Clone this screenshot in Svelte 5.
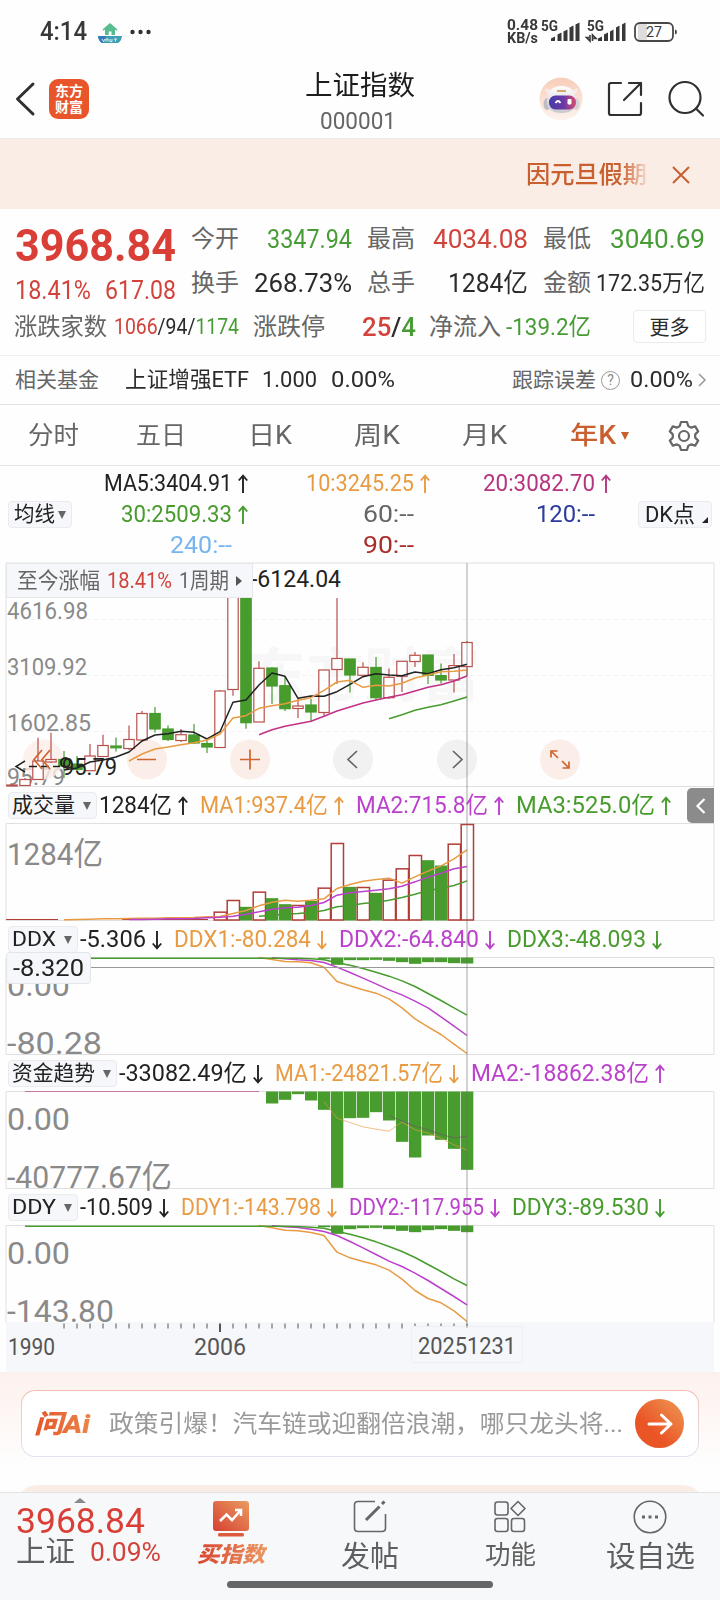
<script lang="ts">
  type Candle = { up: boolean; top: number; bottom: number; high: number; low: number }
  type Series = { color: string; from: number; ys: number[]; thin?: boolean }
  type Legend = { text: string; width: number; color: string; dir?: 'up' | 'down' }
  type Label = { text: string; width: number; y: number }
  type Panel = {
    name: string
    nameWidth: number
    legend: Legend[]
    labels: Label[]
    series: Series[]
    bars: { from: number; ys: number[] }
  }

  const RED = '#b33d37'
  const GREEN = '#479c2d'
  const ORANGE = '#e89b43'
  const PURPLE = '#bb41cc'
  const INK = '#222'

  // squeeze or stretch a label to a fixed width
  function fit(node: HTMLElement, width: number) {
    const natural = node.getBoundingClientRect().width
    node.style.width = width + 'px'
    node.style.transform = `scaleX(${width / natural})`
  }

  const cx = (i: number) => 12 + 13 * i

  const points = (s: Series, div = 3) =>
    s.ys.map((y, k) => `${cx(s.from + k)},${y / div}`).join(' ')

  const quotes = [
    { label: '今开', value: '3347.94', width: 85, tone: 'green' },
    { label: '最高', value: '4034.08', width: 95, tone: 'red' },
    { label: '最低', value: '3040.69', width: 95, tone: 'green' },
    { label: '换手', value: '268.73%', width: 98, tone: '' },
    { label: '总手', value: '1284亿', width: 80, tone: '' },
    { label: '金额', value: '172.35万亿', width: 109, tone: 'small' },
  ]

  const averages: Legend[] = [
    { text: 'MA5:3404.91', width: 128, color: INK, dir: 'up' },
    { text: '10:3245.25', width: 108, color: '#e89b43', dir: 'up' },
    { text: '20:3082.70', width: 112, color: '#b5357f', dir: 'up' },
    { text: '30:2509.33', width: 111, color: GREEN, dir: 'up' },
    { text: '60:--', width: 51, color: '#666' },
    { text: '120:--', width: 59, color: '#2a3a9e' },
    { text: '240:--', width: 62, color: '#78b4ee' },
    { text: '90:--', width: 51, color: '#a82e2c' },
  ]

  // up, body top, body bottom, high, low
  const candles: Candle[] = (
    [
      [1, 785, 786, 785, 786], [1, 779.5, 785.5, 778, 786], [1, 761, 779.5, 737.7, 780],
      [1, 759.5, 762, 732.7, 763], [0, 759.5, 766, 751, 778], [0, 764, 769.5, 756, 770],
      [1, 756, 770.7, 744, 771], [1, 745.5, 756.5, 734.7, 757], [0, 746, 747.8, 737.5, 751.5],
      [1, 739.5, 748.5, 725.5, 750], [1, 713.5, 740, 711, 742], [0, 713.5, 729, 707, 732.5],
      [0, 729, 739.5, 725.5, 741], [1, 734.7, 740.5, 729, 742], [0, 735, 743, 724, 744],
      [0, 743.5, 747, 740, 753], [1, 691, 747.5, 690, 748], [1, 590, 689.5, 590, 695.7],
      [0, 590, 722.7, 590, 728.7], [1, 668.3, 722, 661.3, 722], [0, 668, 686, 667, 704],
      [0, 685.7, 708.7, 677, 711], [1, 706, 708.5, 699, 718], [0, 705, 712, 699, 721],
      [1, 670, 712.5, 670, 715.7], [1, 658.5, 669.5, 598, 684], [0, 659, 675, 659, 692.5],
      [1, 667.3, 675.3, 662.3, 676], [0, 667.5, 697.7, 657, 700], [1, 677.3, 697.7, 668.5, 699],
      [1, 661.3, 676.3, 661, 692], [1, 655.3, 661.5, 652, 667], [0, 655, 675.3, 655, 684],
      [0, 675.6, 680, 663.6, 683.4], [1, 665.6, 680, 654, 692.6], [1, 642.5, 666.6, 641, 676],
    ] as number[][]
  ).map(([up, top, bottom, high, low]) => ({ up: up === 1, top, bottom, high, low }))

  const priceLines: Series[] = [
    {
      color: INK, from: 4,
      ys: [770, 768, 762, 760, 757, 752, 741, 735, 733.7, 731.3, 732.3, 739, 731.7, 702.3, 700, 685, 673, 676.3, 698.3, 696, 696.3, 691.7, 684.3, 676.7, 673.7, 675, 675.7, 672, 673.7, 669.7, 667.7, 664.3],
    },
    {
      color: ORANGE, from: 9,
      ys: [761, 754, 749, 747, 744.7, 742.7, 740, 734, 718, 715.7, 708.3, 705.7, 703.7, 700.3, 697.7, 690.3, 682, 680.3, 687.3, 685.3, 686, 683.3, 678, 675, 671.7, 671.3, 670],
    },
    {
      color: '#c23088', from: 19,
      ys: [734.7, 729.7, 726.3, 723.7, 721.3, 716.3, 711, 707, 703, 700, 697.3, 694.7, 691, 687.3, 684.7, 681, 676],
    },
    { color: GREEN, from: 29, ys: [718.7, 714.7, 710.3, 707.3, 704.7, 701, 697] },
  ]

  const volumeUp = [1, 1, 0, 1, 0, 0, 1, 0, 1, 1, 0, 1, 0, 1, 1, 1, 0, 0, 1, 1]

  const panels: Panel[] = [
    {
      name: '成交量', nameWidth: 63,
      legend: [
        { text: '1284亿', width: 73, color: INK, dir: 'up' },
        { text: 'MA1:937.4亿', width: 128, color: ORANGE, dir: 'up' },
        { text: 'MA2:715.8亿', width: 132, color: PURPLE, dir: 'up' },
        { text: 'MA3:525.0亿', width: 139, color: GREEN, dir: 'up' },
      ],
      labels: [{ text: '1284亿', width: 96, y: 41 }],
      series: [
        { color: ORANGE, from: 4, ys: [289, 288, 287, 286, 286, 285, 284, 284, 283, 283, 282, 280, 279, 270, 261, 247, 236, 230, 233, 230, 226, 195, 183, 173, 168, 164, 179, 160, 143, 127, 106, 79] },
        { color: PURPLE, from: 9, ys: [288, 288, 287, 286, 286, 285, 283, 281, 278, 272, 265, 257, 253, 251, 246, 237, 215, 208, 204, 200, 196, 188, 175, 161, 149, 136, 129] },
        { color: GREEN, from: 19, ys: [278, 275, 272, 270, 267, 261, 250, 246, 240, 236, 230, 222, 212, 201, 195, 186, 172] },
      ],
      bars: { from: 16, ys: [266, 231, 250, 206, 224, 242, 246, 232, 194, 60, 190, 192, 208, 170, 136, 96, 110, 126, 62, 3] },
    },
    {
      name: 'DDX', nameWidth: 44,
      legend: [
        { text: '-5.306', width: 66, color: INK, dir: 'down' },
        { text: 'DDX1:-80.284', width: 137, color: ORANGE, dir: 'down' },
        { text: 'DDX2:-64.840', width: 140, color: PURPLE, dir: 'down' },
        { text: 'DDX3:-48.093', width: 139, color: GREEN, dir: 'down' },
      ],
      labels: [{ text: '0.00', width: 63, y: 38 }, { text: '-80.28', width: 95, y: 95.5 }],
      series: [
        { color: ORANGE, from: 19, ys: [0, 6, 12, 13, 16, 29, 72, 85, 97, 107, 124, 151, 184, 208, 231, 260, 288] },
        { color: PURPLE, from: 20, ys: [1, 4, 7, 9, 15, 29, 45, 62, 79, 97, 112, 131, 151, 178, 206, 234] },
        { color: GREEN, from: 1, ys: [2, 2, 2, 2, 2, 2, 2, 2, 2, 2, 2, 2, 2, 2, 2, 2, 2, 2, 2, 2, 2, 2, 4, 7, 16, 23, 33, 44, 56, 70, 87, 108, 129, 151, 173] },
      ],
      bars: { from: 24, ys: [5, 22, 8, 8, 7, 10, 14, 19, 14, 14, 17, 18] },
    },
    {
      name: '资金趋势', nameWidth: 83,
      legend: [
        { text: '-33082.49亿', width: 128, color: INK, dir: 'down' },
        { text: 'MA1:-24821.57亿', width: 168, color: ORANGE, dir: 'down' },
        { text: 'MA2:-18862.38亿', width: 178, color: PURPLE, dir: 'up' },
      ],
      labels: [{ text: '0.00', width: 63, y: 38 }, { text: '-40777.67亿', width: 165, y: 96 }],
      series: [
        { color: ORANGE, from: 24, thin: true, ys: [31, 80, 93, 106, 113, 119, 92, 115, 125, 140, 160, 176] },
        { color: '#76506e', from: 29, thin: true, ys: [73, 88, 104, 115, 129, 139, 135] },
        { color: '#b5357f', from: 1, thin: true, ys: [0, 0, 0, 0, 0, 0, 0, 0, 0, 0, 0, 0, 0, 0, 0, 0, 0, 0, 0] },
      ],
      bars: { from: 20, ys: [36, 25, 8, 27, 55, 289, 80, 79, 62, 87, 151, 198, 132, 145, 172, 235] },
    },
    {
      name: 'DDY', nameWidth: 44,
      legend: [
        { text: '-10.509', width: 73, color: INK, dir: 'down' },
        { text: 'DDY1:-143.798', width: 140, color: ORANGE, dir: 'down' },
        { text: 'DDY2:-117.955', width: 135, color: PURPLE, dir: 'down' },
        { text: 'DDY3:-89.530', width: 137, color: GREEN, dir: 'down' },
      ],
      labels: [{ text: '0.00', width: 63, y: 38 }, { text: '-143.80', width: 107, y: 95.5 }],
      series: [
        { color: ORANGE, from: 19, ys: [0, 7, 14, 16, 21, 30, 80, 97, 108, 118, 134, 161, 195, 219, 232, 256, 288] },
        { color: PURPLE, from: 20, ys: [1, 4, 6, 11, 18, 30, 48, 67, 87, 107, 123, 143, 165, 189, 213, 238] },
        { color: GREEN, from: 1, ys: [2, 2, 2, 2, 2, 2, 2, 2, 2, 2, 2, 2, 2, 2, 2, 2, 2, 2, 2, 2, 2, 3, 5, 8, 18, 26, 37, 49, 63, 78, 96, 117, 138, 160, 180] },
      ],
      bars: { from: 24, ys: [5, 25, 11, 8, 7, 11, 16, 20, 14, 11, 16, 20] },
    },
  ]

  const ticks = Array.from({ length: 32 }, (_, k) => cx(k + 4))
</script>

{#snippet arrow(dir: string | undefined)}
  <svg class="arrow" viewBox="0 0 10 20" width="10" height="20">
    {#if dir === 'up'}
      <path d="M5 19V2M.8 6.5 5 1.6l4.2 4.9" />
    {:else if dir === 'down'}
      <path d="M5 1v17M.8 13.5 5 18.4l4.2-4.9" />
    {/if}
  </svg>
{/snippet}

<main class="screen">
  <header class="status">
    <b class="status__time" use:fit={47}>4:14</b>
    <svg class="status__app" viewBox="0 0 24 22" width="24" height="22">
      <path d="M12 1 4.5 7.5l1 1.2L7 7.5V13h3.7V9.5h2.8V13H17V7.5l1.5 1.2 1-1.2z" fill="#57bd8e" />
      <path d="M0 14h24q-.4 5-4 7H4q-3.600-2-4-7z" fill="#3f9fb4" />
      <path d="M0 14h8l-3 7H4q-3.600-2-4-7z" fill="#3978bd" />
      <path d="M4 17l1.500 2.500L7 17m1 2.500V17h2v2.500m2-2.500v2.500h2m0-2.500v2.500m2-2.500h3m-1.500 0v2.500" fill="none" stroke="#d9f1ee" />
    </svg>
    <svg class="status__more" viewBox="0 0 22 6" width="22" height="6" fill="#333">
      <circle cx="2.500" cy="3" r="2.200" /><circle cx="10.500" cy="3" r="2.200" /><circle cx="18.500" cy="3" r="2.200" />
    </svg>
    <div class="status__speed"><b use:fit={31}>0.48</b><b use:fit={31}>KB/s</b></div>
    <div class="signal">
      <b use:fit={17}>5G</b>
      <svg viewBox="0 0 40 20" width="40" height="20" fill="#383838">
        <path d="M11 19v-2.500l4-2V19zM17.500 19v-6.500l4-2V19zM23.500 19V9.500l4-2V19zM29.500 19V5.500l4-2V19zM35.500 19V2.500l4-2V19z" />
      </svg>
    </div>
    <div class="signal signal--second">
      <b use:fit={17}>5G</b>
      <svg viewBox="0 0 40 20" width="40" height="20" fill="#383838">
        <path d="M12 19v-2.500l4-2V19zM18 19v-6.500l4-2V19zM24 19V9.500l3.500-2V19zM30 19V5.500l3.500-2V19zM36 19V2.500l3.500-2V19z" />
        <path d="M4 13v6l-3.500-3.500H3M6.500 19v-6l3.500 3.500H7.500" fill="none" stroke="#383838" stroke-width="1.600" />
      </svg>
    </div>
    <svg class="battery" viewBox="0 0 46 20" width="46" height="20">
      <rect x="5" y="2" width="9" height="16" fill="#ddd" />
      <rect x="2" y="1" width="38" height="18" rx="5" fill="none" stroke="#484848" stroke-width="1.800" />
      <path d="M42 7.500q2 .3 2 2.500t-2 2.500z" fill="#484848" />
      <text x="13" y="15" textLength="16" lengthAdjust="spacingAndGlyphs">27</text>
    </svg>
  </header>

  <nav class="head">
    <svg class="head__back" viewBox="0 0 22 36" width="22" height="36">
      <path d="M19 3 3.500 18 19 33" />
    </svg>
    <div class="logo"><span>东方</span><span>财富</span></div>
    <div class="head__title">
      <span class="head__name" use:fit={110}>上证指数</span>
      <span class="head__code" use:fit={76}>000001</span>
    </div>
    <svg class="head__bot" viewBox="0 0 44 44" width="44" height="44">
      <defs>
        <linearGradient id="bot-bg" x2="0" y2="1"><stop stop-color="#f8cdb9" /><stop offset="1" stop-color="#fdf3ee" /></linearGradient>
        <linearGradient id="bot-visor"><stop stop-color="#463ba9" /><stop offset=".55" stop-color="#6a39a5" /><stop offset="1" stop-color="#dc4c71" /></linearGradient>
        <linearGradient id="bot-head" x2="0" y2="1"><stop stop-color="#fff" /><stop offset="1" stop-color="#c9c7cc" /></linearGradient>
      </defs>
      <circle cx="22" cy="22" r="21.500" fill="url(#bot-bg)" />
      <path d="M6 11q0 6 4 6l5-3zM39 11q0 6-4 6l-5-3z" fill="#f7e9e4" />
      <ellipse cx="8" cy="27" rx="3.500" ry="6" fill="#bfbcc3" /><ellipse cx="37" cy="27" rx="3.500" ry="6" fill="#d5d1d8" />
      <path d="M8 24Q9 9 22.500 9T37 24q0 12-14.500 12T8 24z" fill="url(#bot-head)" />
      <path d="M18 14h9" stroke="#dda56d" stroke-width="2" />
      <rect x="10" y="18.500" width="27" height="14" rx="6.500" fill="url(#bot-visor)" />
      <path d="M16.500 26q2.500-4 5 0" fill="none" stroke="#fff" stroke-width="1.800" />
      <rect x="28.500" y="22" width="4" height="5.500" rx="1" fill="#fff" />
    </svg>
    <svg class="head__share" viewBox="0 0 36 36" width="36" height="36">
      <path d="M14 2H4Q2 2 2 4v28q0 2 2 2h28q2 0 2-2V22M22 2h12v12M34 2 17 19" />
    </svg>
    <svg class="head__search" viewBox="0 0 38 38" width="38" height="38">
      <circle cx="18" cy="17.500" r="15.500" /><path d="m29 28.500 7 7" />
    </svg>
  </nav>

  <section class="banner">
    <span use:fit={121}>因元旦假期</span>
    <svg viewBox="0 0 18 18" width="18" height="18"><path d="m1 1 16 16M17 1 1 17" /></svg>
  </section>

  <section class="quote">
    <div class="quote__last">
      <b class="quote__price" use:fit={161}>3968.84</b>
      <div class="quote__change"><span use:fit={76}>18.41%</span><span use:fit={71}>617.08</span></div>
    </div>
    <div class="quote__grid">
      {#each quotes as q}
        <div class="cell">
          <span class="muted" use:fit={48}>{q.label}</span>
          <span class={q.tone} use:fit={q.width}>{q.value}</span>
        </div>
      {/each}
    </div>
  </section>

  <section class="breadth">
    <span class="muted" use:fit={93}>涨跌家数</span>
    <span class="breadth__count" use:fit={125}><i class="red">1066</i>/94/<i class="green">1174</i></span>
    <span class="muted breadth__limit" use:fit={72}>涨跌停</span>
    <span class="breadth__ratio" use:fit={54}><i class="red">25</i>/<i class="green">4</i></span>
    <span class="muted breadth__flow" use:fit={72}>净流入</span>
    <span class="green breadth__net" use:fit={85}>-139.2亿</span>
    <button class="more">更多</button>
  </section>

  <section class="fund">
    <span class="muted" use:fit={84}>相关基金</span>
    <span class="fund__name" use:fit={124}>上证增强ETF</span>
    <span class="fund__nav" use:fit={55}>1.000</span>
    <span class="fund__pct" use:fit={64}>0.00%</span>
    <span class="muted fund__err" use:fit={84}>跟踪误差</span>
    <span class="help">?</span>
    <span use:fit={63}>0.00%</span>
    <svg viewBox="0 0 8 14" width="8" height="14"><path d="m1 1 6 6-6 6" /></svg>
  </section>

  <nav class="tabs">
    <span use:fit={51}>分时</span>
    <span use:fit={50}>五日</span>
    <span use:fit={44}>日K</span>
    <span use:fit={46}>周K</span>
    <span use:fit={45}>月K</span>
    <span class="tabs__active" use:fit={46}>年K</span>
    <i class="caret caret--active"></i>
    <svg class="gear" viewBox="0 0 32 32" width="32" height="32">
      <path d="M13 2h6l1.200 4 2.800 1.600 4.200-1.200 3 5-3 3v3.200l3 3-3 5-4.200-1.200-2.800 1.600L19 30h-6l-1.200-4L9 24.400l-4.200 1.200-3-5 3-3v-3.200l-3-3 3-5L9 7.600 11.800 6z" />
      <circle cx="16" cy="16" r="5" />
    </svg>
  </nav>

  <section class="averages">
    <span class="tag tag--ma"><span use:fit={41}>均线</span><i class="caret"></i></span>
    <div class="averages__grid">
      {#each averages as a}
        <div class="averages__item" style:color={a.color}>
          <span use:fit={a.width}>{a.text}</span>
          {@render arrow(a.dir)}
        </div>
      {/each}
    </div>
    <span class="tag tag--dk"><span use:fit={50}>DK点</span><i class="corner"></i></span>
  </section>

  <section class="chart">
    <svg class="price" viewBox="0 562 720 225" width="720" height="225">
      <path d="M6 563H714V786.500H6z" class="frame" />
      <path d="M6 619.500H714M6 675.500H714M6 731.500H714" class="grid" />
      <text x="248" y="696" class="watermark" textLength="232">东方财富</text>
      <g class="axis-text">
        <text x="7" y="619" textLength="81" lengthAdjust="spacingAndGlyphs">4616.98</text>
        <text x="7" y="675" textLength="80" lengthAdjust="spacingAndGlyphs">3109.92</text>
        <text x="7" y="731" textLength="84" lengthAdjust="spacingAndGlyphs">1602.85</text>
        <text x="7" y="785" textLength="58" lengthAdjust="spacingAndGlyphs">95.79</text>
      </g>
      {#each [43, 147, 250, 353, 457, 560] as x, i}
        <circle cx={x} cy="759.500" r="20" fill={i === 3 || i === 4 ? '#f1f1f1' : '#fbeee8'} fill-opacity={i ? 1 : 0.8} />
      {/each}
      {#each candles as c, i}
        <g class={c.up ? 'up' : 'down'}>
          <path d="M{cx(i)} {c.high}V{c.top}M{cx(i)} {c.bottom}V{c.low}" />
          <rect x={cx(i) - 5.200} y={c.top} width="10.400" height={Math.max(c.bottom - c.top, 1)} />
        </g>
      {/each}
      {#each priceLines as s}
        <polyline points={points(s, 1)} class="line" stroke={s.color} />
      {/each}
      <circle cx="65.500" cy="762.500" r="4.500" fill={GREEN} stroke={INK} stroke-width="2" />
      <path d="m25 761-9 5.500 9 5.500M29 766.500h8m4 0h8m4 0h7" class="low-mark" />
      <text x="62" y="774.500" class="mark" textLength="55" lengthAdjust="spacingAndGlyphs">95.79</text>
      <text x="251" y="587" class="mark" textLength="90" lengthAdjust="spacingAndGlyphs">-6124.04</text>
      <g class="ctl">
        <path d="m42 750-8 9.500 8 9.500M50 750l-8 9.500 8 9.500" />
        <path d="M137 759.500h19M240 759.500h20M250 749.500v20" />
        <path d="M551 757.500V751h6.500M551 751l7 7M569 761.500v6.500h-6.500M569 768l-7-7" />
      </g>
      <path d="m357 751-9 8.500 9 8.500M453 751l9 8.500-9 8.500" class="ctl ctl--grey" />
    </svg>
    <div class="range">
      <span use:fit={83}>至今涨幅</span>
      <span class="red" use:fit={65}>18.41%</span>
      <span use:fit={50}>1周期</span>
      <i class="range__caret"></i>
    </div>

    {#each panels as p, n}
      <div class="legend">
        <span class="tag"><span use:fit={p.nameWidth}>{p.name}</span><i class="caret"></i></span>
        {#each p.legend as l}
          <span class="legend__item" style:color={l.color}>
            <span use:fit={l.width}>{l.text}</span>
            {@render arrow(l.dir)}
          </span>
        {/each}
      </div>
      <svg class="panel" viewBox="0 0 720 97" width="720" height="97">
        <path d="M6 0V96.500H714V0" class="frame" />
        <path d="M6-.5H714" class="frame" />
        {#each p.labels as t}
          <text x="7" y={t.y} class="panel-text" textLength={t.width} lengthAdjust="spacingAndGlyphs">{t.text}</text>
        {/each}
        {#if n === 0}
          <path d="M6 95.500H58M122 95.500H208" stroke={RED} />
        {/if}
        {#each p.bars.ys as y, k}
          {@const x = cx(p.bars.from + k) - 6.500}
          {#if n > 0}
            <rect x={x + 0.500} y="-.5" width="12.300" height={y / 3} fill={GREEN} />
          {:else if volumeUp[k]}
            <rect x={x + 0.700} y={y / 3 - 0.500} width="12.300" height={96.500 - y / 3} class="vol-up" />
          {:else}
            <rect x={x + 0.500} y={y / 3 - 0.500} width="12.300" height={97 - y / 3} fill={GREEN} />
          {/if}
        {/each}
        <g transform="translate(0 -.5)">
          {#each p.series as s}
            <polyline points={points(s)} class="line" class:line--thin={s.thin} stroke={s.color} />
          {/each}
        </g>
        {#if n === 1}
          <path d="M6 9.500H714" stroke="#999" />
        {/if}
      </svg>
    {/each}

    <svg class="timeline" viewBox="0 0 720 50" width="720" height="50">
      <rect x="6" width="708" height="50" fill="#f6f7fa" />
      {#each ticks as x}
        <path d="M{x} 1.500v{x === 220 ? 8.500 : 5}" stroke="#555" stroke-width={x === 220 ? 2 : 1} />
      {/each}
      <rect x="411.500" y="4.500" width="111" height="36" rx="2" fill="#f6f7fa" stroke="#eeeff3" />
      <text x="8" y="33" textLength="47" lengthAdjust="spacingAndGlyphs">1990</text>
      <text x="194" y="33" textLength="52" lengthAdjust="spacingAndGlyphs">2006</text>
      <text x="418" y="31.500" textLength="98" lengthAdjust="spacingAndGlyphs">20251231</text>
    </svg>

    <i class="crosshair"></i>
    <div class="cursor-value"><span use:fit={71}>-8.320</span></div>
    <div class="drawer">
      <svg viewBox="0 0 10 16" width="10" height="16"><path d="M8.500 1 1.500 8l7 7" /></svg>
    </div>
  </section>

  <section class="ask">
    <div class="ask__box">
      <b class="ask__logo" use:fit={56}>问Ai</b>
      <span class="ask__text" use:fit={514}>政策引爆！汽车链或迎翻倍浪潮，哪只龙头将...</span>
      <span class="ask__go">
        <svg viewBox="0 0 26 22" width="26" height="22"><path d="M2 11h22M14.500 2 24 11l-9.500 9" /></svg>
      </span>
    </div>
    <div class="ask__card"></div>
  </section>

  <footer class="dock">
    <div class="dock__index">
      <i class="dock__up"></i>
      <span class="dock__price" use:fit={129}>3968.84</span>
      <div class="dock__row"><span class="dock__name" use:fit={59}>上证</span><span class="red" use:fit={71}>0.09%</span></div>
    </div>
    <div class="dock__item">
      <svg viewBox="0 0 36 36" width="36" height="36">
        <defs><linearGradient id="buy" x1="0" y1="1" x2="1" y2="0"><stop stop-color="#d64032" /><stop offset="1" stop-color="#ea9b60" /></linearGradient></defs>
        <rect width="36" height="30" rx="3" fill="url(#buy)" />
        <rect x="5" y="32" width="26" height="3.500" rx="1.500" fill="#dc5a3e" />
        <path d="m7 20 6.500-6.500 5.500 5.500 8-9M22 9h6v6" fill="none" stroke="#fff" stroke-width="2.600" />
      </svg>
      <b class="dock__buy" use:fit={68}>买指数</b>
    </div>
    <div class="dock__item">
      <svg viewBox="0 0 34 34" width="34" height="34" class="outline">
        <path d="M22 1.500H5Q1.500 1.500 1.500 5v23q0 3.500 3.500 3.500h24q3.500 0 3.500-3.500V14" />
        <path d="M13 20 26.500 6.500M29 4l2.500-2.500" stroke-width="3" />
      </svg>
      <span class="dock__big" use:fit={58}>发帖</span>
    </div>
    <div class="dock__item">
      <svg viewBox="0 0 32 34" width="32" height="34" class="outline">
        <rect x="1" y="2" width="13" height="13" rx="2.500" /><rect x="1" y="18.500" width="13" height="13" rx="2.500" />
        <rect x="17.500" y="18.500" width="13" height="13" rx="2.500" /><path d="m24 1.500 7 7-7 7-7-7z" stroke-linejoin="round" />
      </svg>
      <span use:fit={51}>功能</span>
    </div>
    <div class="dock__item">
      <svg viewBox="0 0 34 34" width="34" height="34" class="outline">
        <circle cx="17" cy="17" r="15.800" />
        <path d="M9 17h3m3.500 0h3m3.500 0h3" stroke-width="3" />
      </svg>
      <span class="dock__big" use:fit={89}>设自选</span>
    </div>
    <i class="home"></i>
  </footer>
</main>

<style>
  :global(body) {
    background: #fff;
  }

  .screen {
    width: 720px;
    height: 1600px;
    overflow: hidden;
    background: #fefefe;
    color: #2b2b2b;
    font-family: Roboto, 'Noto Sans CJK SC', sans-serif;
    font-size: 25px;
    line-height: 1;
  }

  .screen * {
    box-sizing: border-box;
  }

  span,
  b {
    display: inline-block;
    flex-shrink: 0;
    white-space: nowrap;
    transform-origin: 0 50%;
  }

  i {
    font-style: normal;
  }

  svg {
    display: block;
    flex-shrink: 0;
    overflow: visible;
  }

  .red {
    color: #d1433b;
  }

  .green {
    color: #479c35;
  }

  .muted {
    color: #666;
  }

  .status {
    display: flex;
    align-items: center;
    height: 62px;
    padding: 1px 0 0 40px;
    color: #383838;
  }

  .status__time {
    font-size: 25px;
    font-weight: 500;
  }

  .status__app {
    margin: 2px 0 0 11px;
  }

  .status__more {
    margin-left: 8px;
  }

  .status__speed {
    display: flex;
    flex-direction: column;
    align-items: flex-start;
    width: 31px;
    margin-left: 355px;
    font-size: 15px;
    line-height: 12.500px;
  }

  .signal {
    position: relative;
    width: 40px;
    height: 20px;
    margin-left: 2px;
    font-size: 14px;
  }

  .signal b {
    position: absolute;
    top: -3px;
    left: 1px;
  }

  .signal--second {
    margin-left: 6px;
  }

  .battery {
    margin-left: 7px;
  }

  .battery text {
    font-size: 15px;
    fill: #383838;
  }

  .head {
    display: flex;
    align-items: center;
    height: 77px;
    padding: 0 0 2px 14px;
    border-bottom: 1px solid #e9e9ec;
  }

  .head__back,
  .head__share,
  .head__search {
    fill: none;
    stroke: #303030;
    stroke-width: 2.200;
    stroke-linejoin: round;
    stroke-linecap: round;
  }

  .head__back {
    stroke-width: 3;
  }

  .logo {
    display: flex;
    flex-direction: column;
    align-items: center;
    justify-content: center;
    width: 40px;
    height: 40px;
    margin-left: 13px;
    border-radius: 9px;
    background: #e9552a;
    color: #fff;
    font-size: 14px;
    font-weight: 700;
    line-height: 16.500px;
  }

  .head__title {
    display: flex;
    flex-direction: column;
    align-items: flex-start;
    gap: 10px;
    width: 110px;
    margin: 7px 0 0 216px;
  }

  .head__name {
    color: #1c1c1c;
    font-size: 27px;
  }

  .head__code {
    margin-left: 15px;
    color: #666;
    font-size: 23px;
  }

  .head__bot {
    margin-left: 124px;
  }

  .head__share {
    margin-left: 24px;
  }

  .head__search {
    margin-left: 24px;
  }

  .banner {
    display: flex;
    align-items: center;
    height: 70px;
    padding: 1px 0 0 526px;
    background: #faede6;
    color: #c95f2e;
    font-size: 24px;
    font-weight: 500;
  }

  .banner span {
    -webkit-mask-image: linear-gradient(90deg, #000 78%, transparent 102%);
    mask-image: linear-gradient(90deg, #000 78%, transparent 102%);
  }

  .banner svg {
    margin-left: 25px;
    fill: none;
    stroke: #c95f2e;
    stroke-width: 2;
  }

  .quote {
    display: flex;
    padding: 8px 15px 0 15px;
    height: 96px;
  }

  .quote__last {
    width: 177px;
    padding-top: 6px;
  }

  .quote__price {
    color: #d93f37;
    font-size: 45px;
  }

  .quote__change {
    display: flex;
    gap: 14px;
    margin-top: 10px;
    color: #d1433b;
    font-size: 25px;
  }

  .quote__grid {
    display: grid;
    grid-template-columns: 160px 160px 161px;
    grid-auto-rows: 44px;
    column-gap: 16px;
  }

  .cell {
    display: flex;
    align-items: center;
    justify-content: space-between;
    font-size: 26px;
  }

  .cell .muted {
    margin-left: -1px;
    font-size: 24px;
  }

  .cell .small {
    font-size: 23px;
  }

  .breadth {
    display: flex;
    align-items: center;
    height: 51px;
    padding: 0 14px 7px 14px;
    border-bottom: 1px solid #f0f0f1;
    font-size: 24px;
  }

  .breadth__count {
    margin-left: 7px;
    font-size: 22px;
  }

  .breadth__limit {
    margin-left: 14px;
  }

  .breadth__ratio {
    margin-left: 37px;
    font-size: 26px;
    font-weight: 500;
  }

  .breadth__flow {
    margin-left: 13px;
  }

  .breadth__net {
    margin-left: 5px;
  }

  .more {
    width: 73px;
    height: 33px;
    margin-left: auto;
    padding: 0;
    border: 1px solid #ebebeb;
    border-radius: 4px;
    background: #fff;
    color: #2b2b2b;
    font: 20px/1 'Noto Sans CJK SC', sans-serif;
  }

  .fund {
    display: flex;
    align-items: center;
    height: 49px;
    padding: 0 14px 0 15px;
    border-bottom: 1px solid #e3e4e6;
    font-size: 22px;
  }

  .fund__name {
    margin-left: 26px;
  }

  .fund__nav {
    margin-left: 13px;
  }

  .fund__pct {
    margin-left: 14px;
  }

  .fund .muted {
    font-size: 21px;
  }

  .fund__err {
    margin-left: 117px;
  }

  .fund .help {
    width: 19px;
    height: 19px;
    margin: 0 10px 0 5px;
    border: 1.500px solid #999;
    border-radius: 50%;
    color: #888;
    font-size: 14px;
    line-height: 16px;
    text-align: center;
  }

  .fund svg {
    margin-left: 5px;
    fill: none;
    stroke: #999;
    stroke-width: 1.500;
  }

  .tabs {
    display: flex;
    align-items: center;
    height: 61px;
    padding: 1px 20px 0 28px;
    border-bottom: 1px solid #e3e4e6;
    color: #666;
    font-size: 25px;
  }

  .tabs span + span {
    margin-left: 62px;
  }

  .tabs span:nth-child(2) {
    margin-left: 57px;
  }

  .tabs .tabs__active {
    margin-left: 63px;
    color: #c95f2e;
    font-weight: 500;
  }

  .caret {
    flex-shrink: 0;
    border: 4.500px solid transparent;
    border-top: 8px solid #666;
    border-bottom: 0;
  }

  .caret--active {
    margin-left: 5px;
    border-top-color: #c95f2e;
  }

  .gear {
    margin-left: auto;
    fill: none;
    stroke: #666;
    stroke-width: 2.200;
    stroke-linejoin: round;
  }

  .tag {
    display: flex;
    align-items: center;
    gap: 8px;
    height: 27px;
    padding: 0 5px 0 3px;
    border: 1px solid #e9ebef;
    border-radius: 4px;
    background: #f6f7fa;
    color: #222;
    font-size: 21px;
  }

  .averages {
    display: flex;
    align-items: center;
    height: 96px;
    padding: 1px 8px 0;
    font-size: 23px;
  }

  .tag--ma {
    width: 64px;
    gap: 3px;
    padding: 0 5px;
  }

  .tag--dk {
    width: 74px;
    margin-left: 27px;
    padding-left: 6px;
    gap: 7px;
    font-size: 22px;
  }

  .corner {
    flex-shrink: 0;
    margin-top: 11px;
    border: 3.500px solid #222;
    border-top-color: transparent;
    border-left-color: transparent;
  }

  .averages__grid {
    display: grid;
    grid-template-columns: 176px 182px 181px;
    grid-auto-rows: 31px;
  }

  .averages__item {
    display: flex;
    align-items: center;
    justify-content: flex-end;
    gap: 6px;
  }

  .arrow {
    fill: none;
    stroke: currentColor;
    stroke-width: 1.900;
  }

  .chart {
    position: relative;
  }

  .frame {
    fill: none;
    stroke: #e0e0e2;
  }

  .grid {
    stroke: #f3f3f3;
    stroke-dasharray: 5 3;
  }

  .watermark {
    font-size: 58px;
    font-weight: 700;
    fill: #f7f7f7;
  }

  .axis-text {
    font-size: 24.500px;
    fill: #8a8a8a;
  }

  .mark {
    font-size: 24px;
    fill: #222;
  }

  .low-mark {
    fill: none;
    stroke: #222;
    stroke-width: 1.500;
  }

  .up {
    fill: #fff;
    stroke: #b8504b;
    stroke-width: 1.200;
  }

  .down {
    fill: #479c2d;
    stroke: #479c2d;
    stroke-width: 1.200;
  }

  .vol-up {
    fill: #fff;
    stroke: #b33d37;
    stroke-width: 1.500;
  }

  .line {
    fill: none;
    stroke-width: 1.500;
    stroke-linejoin: round;
  }

  .line--thin {
    stroke-width: 0.900;
    opacity: 0.700;
  }

  .ctl {
    fill: none;
    stroke: #d0652f;
    stroke-width: 1.700;
  }

  .ctl--grey {
    stroke: #666;
  }

  .range {
    position: absolute;
    top: 1px;
    left: 6px;
    display: flex;
    align-items: center;
    gap: 7px;
    width: 247px;
    height: 35px;
    padding-left: 10px;
    border: 1px solid #e6e7ea;
    background: #f6f7fa;
    color: #666;
    font-size: 22px;
  }

  .range__caret {
    border: 5px solid transparent;
    border-left: 6px solid #555;
    border-right: 0;
  }

  .legend {
    display: flex;
    align-items: center;
    height: 37px;
    padding: 0 0 0 8px;
    font-size: 23px;
  }

  .legend__item {
    display: flex;
    align-items: center;
    gap: 6px;
    margin-right: 12px;
  }

  .legend .tag {
    margin-right: 2px;
  }

  .panel-text {
    font-size: 31.500px;
    fill: #8a8a8a;
  }

  .timeline {
    margin-top: -1px;
  }

  .timeline text {
    font-size: 23px;
    fill: #555;
  }

  .crosshair {
    position: absolute;
    top: 1px;
    left: 466px;
    width: 2px;
    height: 765px;
    background: rgb(110 110 110 / 0.3);
  }

  .cursor-value {
    position: absolute;
    top: 390px;
    left: 6px;
    display: flex;
    align-items: center;
    width: 85px;
    height: 32px;
    padding-left: 6px;
    border: 1px solid #e3e5e9;
    border-radius: 4px;
    background: #f6f7fa;
    color: #222;
    font-size: 23px;
  }

  .drawer {
    position: absolute;
    top: 226px;
    left: 687px;
    display: flex;
    align-items: center;
    justify-content: center;
    width: 27px;
    height: 35px;
    border-radius: 5px 0 0 5px;
    background: #8b8b8b;
  }

  .drawer path {
    fill: none;
    stroke: #fff;
    stroke-width: 2.200;
  }

  .ask {
    height: 120px;
    padding: 18px 21px 0;
    overflow: hidden;
    background: linear-gradient(#fdf1ed, #fefefe 80%);
  }

  .ask__box {
    display: flex;
    align-items: center;
    height: 67px;
    padding-left: 12px;
    border: 1.500px solid transparent;
    border-radius: 14px;
    background:
      linear-gradient(#fff, #fff) padding-box,
      linear-gradient(#f4bfb2, #dfe3f2) border-box;
  }

  .ask__logo {
    background: linear-gradient(90deg, #e4552b, #ec8a4b);
    background-clip: text;
    color: transparent;
    font-size: 26px;
    font-style: italic;
    font-weight: 900;
  }

  .ask__text {
    margin-left: 19px;
    color: #999;
    font-size: 24px;
  }

  .ask__go {
    display: flex;
    align-items: center;
    justify-content: center;
    width: 49px;
    height: 49px;
    margin-left: 12px;
    border-radius: 50%;
    background: linear-gradient(45deg, #ea5526 35%, #ee9a55);
  }

  .ask__go path {
    fill: none;
    stroke: #fff;
    stroke-width: 3;
    stroke-linecap: round;
    stroke-linejoin: round;
  }

  .ask__card {
    height: 40px;
    margin: 28px -4px 0;
    border-radius: 20px;
    background: #faede6;
  }

  .dock {
    position: relative;
    display: flex;
    height: 108px;
    padding-left: 16px;
    border-top: 1px solid #e2e3e5;
    background: #f7f8fa;
    color: #5f5f5f;
    font-size: 26px;
  }

  .dock__index {
    display: flex;
    flex-direction: column;
    align-items: flex-start;
    width: 146px;
  }

  .dock__up {
    margin: 5px 0 3px 58px;
    border: 6px solid transparent;
    border-top: 0;
    border-bottom: 5px solid #888;
  }

  .dock__price {
    color: #d93f37;
    font-size: 35px;
    line-height: 32px;
  }

  .dock__row {
    display: flex;
    align-items: center;
    gap: 15px;
    height: 28px;
  }

  .dock__name {
    font-size: 29px;
  }

  .dock__row .red {
    font-size: 25px;
  }

  .dock__item {
    display: flex;
    flex-direction: column;
    align-items: center;
    width: 140px;
    padding-top: 7px;
  }

  .dock__item:nth-child(2) {
    width: 138px;
    padding-top: 8px;
  }

  .dock__item > span {
    margin-top: 8px;
  }

  .dock__item > .dock__big {
    margin-top: 9px;
    font-size: 29px;
  }

  .dock__buy {
    margin-top: 7px;
    background: linear-gradient(90deg, #d8432f, #ea9a63);
    background-clip: text;
    color: transparent;
    font-size: 22px;
    font-style: italic;
    font-weight: 900;
  }

  .outline {
    fill: none;
    stroke: #666;
    stroke-width: 1.600;
  }

  .home {
    position: absolute;
    bottom: 12px;
    left: 227px;
    width: 266px;
    height: 7px;
    border-radius: 4px;
    background: #666;
  }
</style>
